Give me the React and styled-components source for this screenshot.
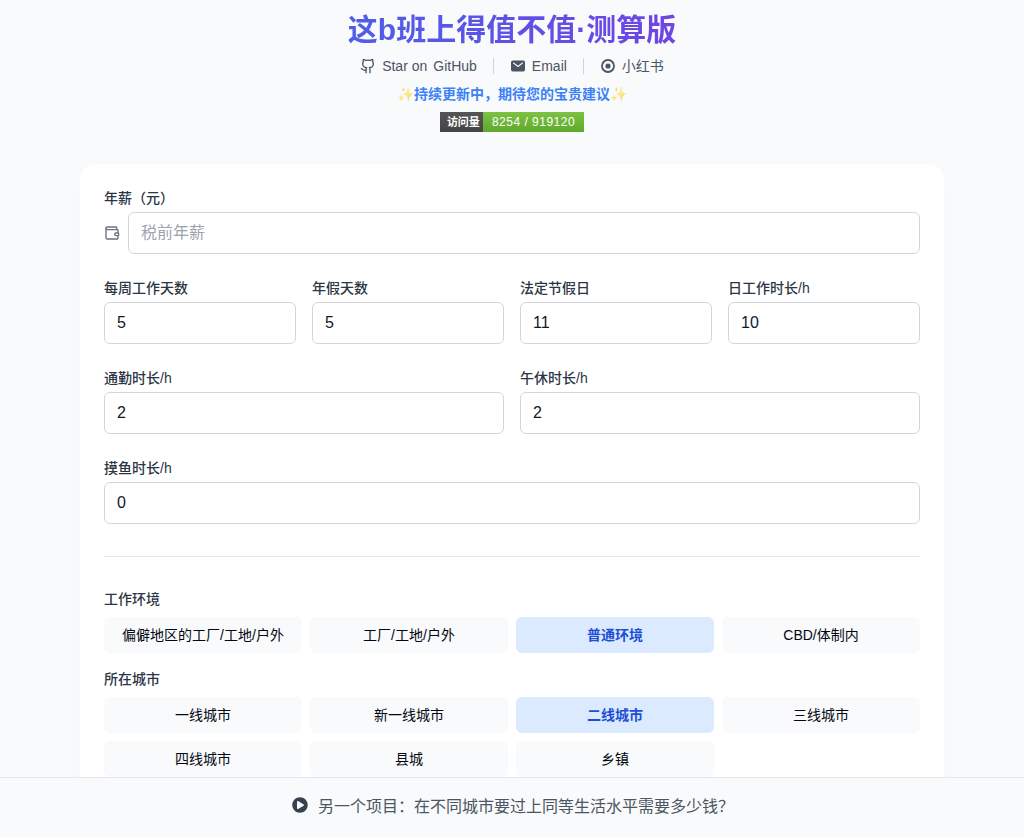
import React from 'react';
import styled, { createGlobalStyle } from 'styled-components';
import { Github, Wallet } from 'lucide-react';
import { IoMail } from 'react-icons/io5';
import { FaPlayCircle } from 'react-icons/fa';

const GlobalStyle = createGlobalStyle`
  * { box-sizing: border-box; }
  html, body { margin: 0; padding: 0; height: 100%; overflow: hidden; }
  body {
    background: #f9fafb;
    font-family: "Liberation Sans", Arial, "Noto Sans CJK SC", sans-serif;
    color: #111827;
  }
`;

const environments = ['偏僻地区的工厂/工地/户外', '工厂/工地/户外', '普通环境', 'CBD/体制内'];
const cities = ['一线城市', '新一线城市', '二线城市', '三线城市', '四线城市', '县城', '乡镇'];

const App = () => (
  <>
    <GlobalStyle />
    <Page>
      <Header>
        <Title>这b班上得值不值·测算版</Title>
        <LinkRow>
          <HeaderLink><Github size={16} strokeWidth={2} /><span>Star on<Spaced>GitHub</Spaced></span></HeaderLink>
          <LinkDivider />
          <HeaderLink><IoMail size={16} />Email</HeaderLink>
          <LinkDivider />
          <HeaderLink><RingIcon />小红书</HeaderLink>
        </LinkRow>
        <Notice><Sparkle>✨</Sparkle>持续更新中，期待您的宝贵建议<Sparkle>✨</Sparkle></Notice>
        <Badge>
          <BadgeLabel>访问量</BadgeLabel>
          <BadgeValue>8254 / 919120</BadgeValue>
        </Badge>
      </Header>

      <Card>
        <Field>
          <Label>年薪（元）</Label>
          <SalaryRow>
            <Wallet size={16} color="#6b7280" strokeWidth={2} />
            <Input placeholder="税前年薪" />
          </SalaryRow>
        </Field>

        <FourColumns>
          <Field><Label>每周工作天数</Label><Input defaultValue="5" /></Field>
          <Field><Label>年假天数</Label><Input defaultValue="5" /></Field>
          <Field><Label>法定节假日</Label><Input defaultValue="11" /></Field>
          <Field><Label>日工作时长/h</Label><Input defaultValue="10" /></Field>
        </FourColumns>

        <TwoColumns>
          <Field><Label>通勤时长/h</Label><Input defaultValue="2" /></Field>
          <Field><Label>午休时长/h</Label><Input defaultValue="2" /></Field>
        </TwoColumns>

        <Field><Label>摸鱼时长/h</Label><Input defaultValue="0" /></Field>

        <Divider />

        <OptionSections>
          <OptionGroup>
            <Label>工作环境</Label>
            <OptionGrid>
              {environments.map((name) => (
                <OptionButton key={name} $active={name === '普通环境'}>{name}</OptionButton>
              ))}
            </OptionGrid>
          </OptionGroup>

          <OptionGroup>
            <Label>所在城市</Label>
            <OptionGrid>
              {cities.map((name) => (
                <OptionButton key={name} $active={name === '二线城市'}>{name}</OptionButton>
              ))}
            </OptionGrid>
          </OptionGroup>
        </OptionSections>
      </Card>
    </Page>

    <Footer>
      <FaPlayCircle size={16} color="#374151" />
      另一个项目：在不同城市要过上同等生活水平需要多少钱？
    </Footer>
  </>
);

const RingIcon = () => (
  <svg width="16" height="16" viewBox="0 0 16 16" fill="none">
    <circle cx="8" cy="8" r="6" stroke="currentColor" strokeWidth="1.8" />
    <circle cx="8" cy="8" r="2.6" fill="currentColor" />
  </svg>
);

const Page = styled.main`
  height: 100vh;
  overflow: hidden;
  padding-top: 12px;
`;

const Header = styled.header`
  display: flex;
  flex-direction: column;
  align-items: center;
`;

const Title = styled.h1`
  margin: 0;
  font-size: 30px;
  line-height: 36px;
  font-weight: 700;
  background: linear-gradient(90deg, #4f5ee8, #6e45e2);
  -webkit-background-clip: text;
  background-clip: text;
  color: transparent;
`;

const LinkRow = styled.nav`
  display: flex;
  align-items: center;
  gap: 16px;
  margin-top: 8px;
  height: 20px;
`;

const HeaderLink = styled.a`
  display: flex;
  align-items: center;
  gap: 6px;
  font-size: 14px;
  line-height: 18px;
  color: #4b5563;

  svg { color: #4b5563; }
`;

const Spaced = styled.span`
  margin-left: 6px;
`;

const LinkDivider = styled.span`
  width: 1px;
  height: 16px;
  background: #d1d5db;
`;

const Notice = styled.p`
  margin: 8px 0 0;
  font-size: 14px;
  line-height: 20px;
  font-weight: 600;
  color: #3b82f6;
`;

const Sparkle = styled.span`
  opacity: 0.55;
`;

const Badge = styled.div`
  display: flex;
  margin-top: 8px;
  height: 20px;
  line-height: 20px;
  color: #fff;
`;

const BadgeLabel = styled.span`
  padding: 0 3px 0 7px;
  font-size: 11px;
  font-weight: 700;
  background: linear-gradient(#555, #444);
`;

const BadgeValue = styled.span`
  padding: 0 9px;
  font-size: 12px;
  letter-spacing: 0.5px;
  background: linear-gradient(#7dc242, #5da92c);
`;

const Card = styled.section`
  width: 864px;
  margin: 32px auto 0;
  padding: 24px;
  background: #fff;
  border-radius: 16px;
  box-shadow: 0 20px 25px -5px rgba(0, 0, 0, 0.03), 0 8px 10px -6px rgba(0, 0, 0, 0.03);
  display: flex;
  flex-direction: column;
  gap: 24px;
`;

const Field = styled.div`
  display: flex;
  flex-direction: column;
  gap: 4px;
  min-width: 0;
`;

const Label = styled.label`
  font-size: 14px;
  line-height: 20px;
  font-weight: 500;
  color: #2b3544;
`;

const SalaryRow = styled.div`
  display: flex;
  align-items: center;
  gap: 8px;

  svg { flex: none; }
`;

const Input = styled.input`
  width: 100%;
  height: 42px;
  padding: 0 12px;
  font: inherit;
  font-size: 16px;
  color: #111827;
  background: #fff;
  border: 1px solid #d1d5db;
  border-radius: 6px;
  outline: none;

  &::placeholder { color: #9ca3af; }
`;

const FourColumns = styled.div`
  display: grid;
  grid-template-columns: repeat(4, 1fr);
  gap: 16px;
`;

const TwoColumns = styled.div`
  display: grid;
  grid-template-columns: repeat(2, 1fr);
  gap: 16px;
`;

const Divider = styled.hr`
  width: 100%;
  margin: 8px 0;
  border: 0;
  border-top: 1px solid #e5e7eb;
`;

const OptionSections = styled.div`
  display: flex;
  flex-direction: column;
  gap: 16px;
`;

const OptionGroup = styled.div`
  display: flex;
  flex-direction: column;
  gap: 8px;
`;

const OptionGrid = styled.div`
  display: grid;
  grid-template-columns: repeat(4, 1fr);
  gap: 8px;
`;

const OptionButton = styled.button`
  height: 36px;
  padding: 0 8px 2px;
  font: inherit;
  font-size: 14px;
  font-weight: ${(props) => (props.$active ? 600 : 400)};
  color: ${(props) => (props.$active ? '#1d4ed8' : '#030712')};
  background: ${(props) => (props.$active ? '#dbeafe' : '#f9fafb')};
  border: 0;
  border-radius: 6px;
`;

const Footer = styled.footer`
  position: fixed;
  left: 0;
  right: 0;
  bottom: 0;
  height: 61px;
  padding: 0 0 6px 2px;
  display: flex;
  align-items: center;
  justify-content: center;
  gap: 10px;
  font-size: 16px;
  color: #4b5563;
  background: #f9fafb;
  border-top: 1px solid #e5e7eb;
`;

export default App;
